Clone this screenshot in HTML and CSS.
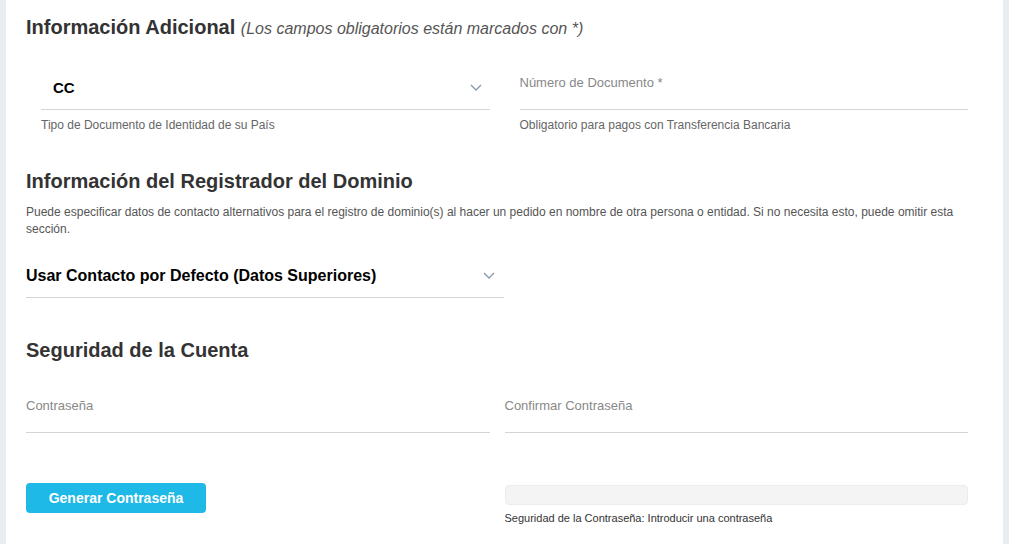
FILE: index.html
```html
<!DOCTYPE html>
<html lang="es">
<head>
<meta charset="utf-8">
<title>Registro</title>
<link rel="stylesheet" href="styles.css">
</head>
<body>
<div class="panel">
  <h2 class="title title-first">Información Adicional <span class="title-note">(Los campos obligatorios están marcados con *)</span></h2>

  <div class="grid row-doc">
    <div class="cell indent">
      <div class="field select-field">
        <span class="select-value small">CC</span>
        <svg class="chevron" width="12" height="7" viewBox="0 0 12 7"><polyline points="1,1 6,6 11,1" fill="none" stroke="#8a9aae" stroke-width="1.4"/></svg>
      </div>
      <div class="help">Tipo de Documento de Identidad de su País</div>
    </div>
    <div class="cell indent">
      <div class="field input-field"><span class="placeholder">Número de Documento *</span></div>
      <div class="help">Obligatorio para pagos con Transferencia Bancaria</div>
    </div>
  </div>

  <h2 class="title title-second">Información del Registrador del Dominio</h2>
  <p class="desc">Puede especificar datos de contacto alternativos para el registro de dominio(s) al hacer un pedido en nombre de otra persona o entidad. Si no necesita esto, puede omitir esta sección.</p>

  <div class="field select-field wide-select">
    <span class="select-value">Usar Contacto por Defecto (Datos Superiores)</span>
    <svg class="chevron" width="12" height="7" viewBox="0 0 12 7"><polyline points="1,1 6,6 11,1" fill="none" stroke="#8a9aae" stroke-width="1.4"/></svg>
  </div>

  <h2 class="title title-third">Seguridad de la Cuenta</h2>

  <div class="grid row-pass">
    <div class="field input-field"><span class="placeholder">Contraseña</span></div>
    <div class="field input-field"><span class="placeholder">Confirmar Contraseña</span></div>
  </div>

  <div class="grid row-gen">
    <div class="cell">
      <button class="btn" type="button">Generar Contraseña</button>
    </div>
    <div class="cell">
      <div class="strength"></div>
      <div class="strength-text">Seguridad de la Contraseña: Introducir una contraseña</div>
    </div>
  </div>
</div>
</body>
</html>
```

FILE: styles.css
```css
* { box-sizing: border-box; }
html, body { margin: 0; padding: 0; }
body {
  background: #e9edf2;
  font-family: "Liberation Sans", Arial, sans-serif;
  width: 1009px;
  height: 544px;
  overflow: hidden;
}
.panel {
  margin: 0 6px;
  background: #ffffff;
  height: 544px;
  padding: 16px 35px 0 20px;
}
.title {
  margin: 0;
  font-size: 20px;
  line-height: 22px;
  font-weight: bold;
  color: #333333;
}
.title-note {
  font-size: 16px;
  font-weight: normal;
  font-style: italic;
  color: #555555;
}
.title-second { margin-top: 37px; }
.title-third { margin-top: 41px; }

.grid {
  display: grid;
  grid-template-columns: 1fr 1fr;
  column-gap: 15px;
}
.row-doc { margin-top: 25px; }
.row-pass { margin-top: 27px; }
.row-gen { margin-top: 50px; }
.indent { padding-left: 15px; }

.field {
  height: 45px;
  border-bottom: 1px solid #d5d5d5;
}
.input-field { padding-top: 10px; }
.placeholder {
  display: block;
  font-size: 13px;
  line-height: 16px;
  color: #888888;
}
.select-field {
  display: flex;
  justify-content: space-between;
  align-items: flex-start;
  padding-right: 8px;
  padding-top: 14px;
}
.select-value {
  font-size: 16px;
  line-height: 18px;
  font-weight: bold;
  color: #000000;
}
.select-value.small {
  font-size: 15px;
  padding-left: 12px;
}
.chevron { margin-top: 5px; flex: none; }
.help {
  margin-top: 7px;
  font-size: 12px;
  line-height: 16px;
  color: #666666;
}
.desc {
  margin: 12px 0 0;
  font-size: 12px;
  line-height: 17px;
  color: #555555;
}
.wide-select {
  width: 478px;
  margin-top: 15px;
  padding-right: 9px;
}
.btn {
  display: block;
  width: 180px;
  height: 30px;
  border: none;
  border-radius: 4px;
  background: #1fb9e7;
  color: #ffffff;
  font-family: "Liberation Sans", Arial, sans-serif;
  font-size: 14px;
  font-weight: bold;
  padding: 0;
}
.strength {
  margin-top: 2px;
  height: 20px;
  background: #f4f4f4;
  border: 1px solid #ececec;
  border-radius: 4px;
}
.strength-text {
  margin-top: 6px;
  font-size: 11px;
  line-height: 14px;
  color: #333333;
}
```
